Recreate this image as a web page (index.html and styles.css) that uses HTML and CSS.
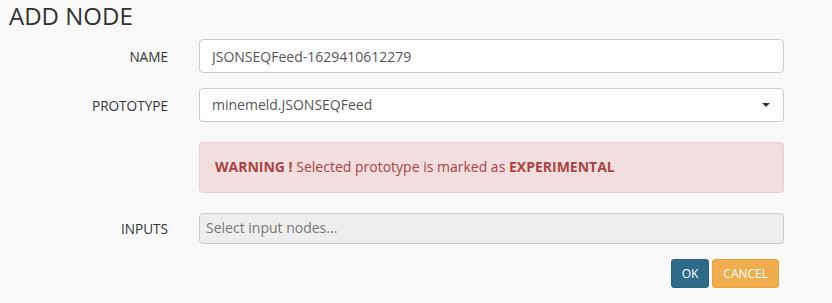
FILE: index.html
```html
<!DOCTYPE html>
<html>
<head>
<meta charset="utf-8">
<link rel="stylesheet" href="styles.css">
</head>
<body>
<div class="page">
  <h3 class="title">ADD NODE</h3>
  <form class="form">
    <div class="row">
      <label class="label">NAME</label>
      <div class="field"><input class="control" type="text" value="JSONSEQFeed-1629410612279"></div>
    </div>
    <div class="row">
      <label class="label">PROTOTYPE</label>
      <div class="field">
        <div class="control select">
          <span>minemeld.JSONSEQFeed</span>
          <span class="caret"></span>
        </div>
      </div>
    </div>
    <div class="row row-alert">
      <div></div>
      <div class="alert"><strong>WARNING !</strong> Selected prototype is marked as <strong>EXPERIMENTAL</strong></div>
    </div>
    <div class="row row-inputs">
      <label class="label">INPUTS</label>
      <div class="field"><div class="control tags">Select input nodes...</div></div>
    </div>
    <div class="actions">
      <button type="button" class="btn btn-ok">OK</button>
      <button type="button" class="btn btn-cancel">CANCEL</button>
    </div>
  </form>
</div>
</body>
</html>
```
FILE: styles.css
```css
html, body {
  margin: 0;
  padding: 0;
  background: #f9f9f9;
  font-family: "Open Sans", "Liberation Sans", sans-serif;
  color: #333;
}
.page {
  width: 832px;
  height: 303px;
  box-sizing: border-box;
  padding: 0 0 0 9px;
}
.title {
  margin: 0;
  padding-top: 3px;
  font-size: 24px;
  font-weight: 400;
  line-height: 26px;
  color: #333;
  height: 36px;
}
.form {
  margin: 0;
}
.row {
  display: grid;
  grid-template-columns: 159px 585px;
  column-gap: 31px;
  align-items: center;
  margin-bottom: 15px;
}
.row-alert {
  margin-top: 20px;
  margin-bottom: 20px;
}
.label {
  text-align: right;
  font-size: 13.6px;
  color: #333;
}
.control {
  display: block;
  box-sizing: border-box;
  width: 585px;
  height: 34px;
  padding: 6px 12px;
  font-family: "Open Sans", "Liberation Sans", sans-serif;
  font-size: 14px;
  line-height: 20px;
  color: #555;
  background: #fff;
  border: 1px solid #ccc;
  border-radius: 4px;
  margin: 0;
}
.select {
  display: flex;
  align-items: center;
  justify-content: space-between;
}
.caret {
  width: 0;
  height: 0;
  border-left: 4px solid transparent;
  border-right: 4px solid transparent;
  border-top: 4px solid #333;
  margin-right: 1px;
}
.alert {
  box-sizing: border-box;
  width: 585px;
  height: 51px;
  padding: 14px 15px;
  background: #f2dede;
  border: 1px solid #ebccd1;
  border-radius: 4px;
  color: #a94442;
  font-size: 14px;
  line-height: 20px;
}
.alert strong {
  font-weight: 700;
}
.tags {
  height: 31px;
  padding: 4px 6px;
  background: #eee;
  color: #777;
}
.actions {
  display: flex;
  justify-content: flex-end;
  gap: 3px;
  width: 770px;
}
.btn {
  box-sizing: border-box;
  height: 29px;
  padding: 4px 10px;
  font-family: "Open Sans", "Liberation Sans", sans-serif;
  font-size: 12px;
  line-height: 18px;
  color: #fff;
  border: 1px solid transparent;
  border-radius: 3px;
  cursor: pointer;
}
.btn-ok {
  background: #2e6a89;
  border-color: #2a6280;
}
.btn-cancel {
  background: #f0ad4e;
  border-color: #eea236;
}
```
